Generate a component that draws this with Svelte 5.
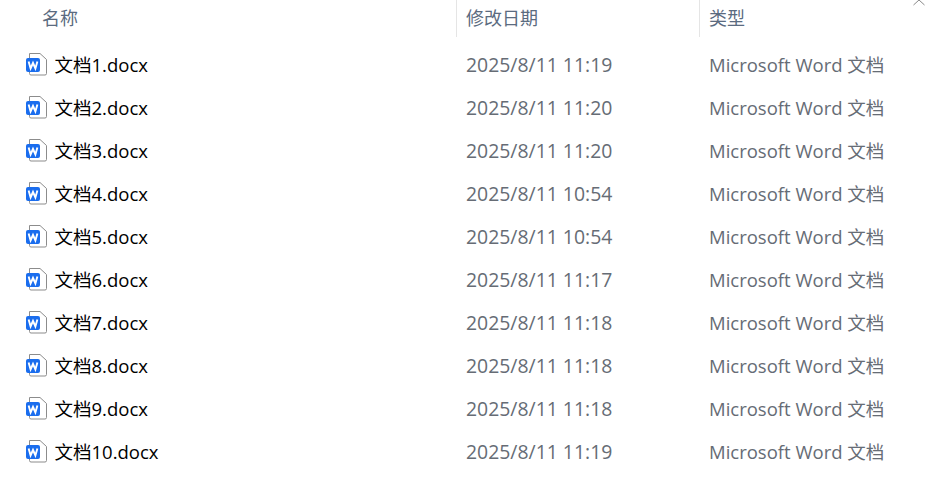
<script>
  const files = [
    { name: "文档1.docx", date: "2025/8/11 11:19" },
    { name: "文档2.docx", date: "2025/8/11 11:20" },
    { name: "文档3.docx", date: "2025/8/11 11:20" },
    { name: "文档4.docx", date: "2025/8/11 10:54" },
    { name: "文档5.docx", date: "2025/8/11 10:54" },
    { name: "文档6.docx", date: "2025/8/11 11:17" },
    { name: "文档7.docx", date: "2025/8/11 11:18" },
    { name: "文档8.docx", date: "2025/8/11 11:18" },
    { name: "文档9.docx", date: "2025/8/11 11:18" },
    { name: "文档10.docx", date: "2025/8/11 11:19" },
  ];
</script>

<div class="explorer">
  <div class="header">
    <div class="col name">名称</div>
    <div class="col date">修改日期</div>
    <div class="col type">类型</div>
    <svg class="sort" width="14" height="6" viewBox="0 0 14 6" aria-hidden="true">
      <path d="M1.5 5 L7 0 L12.5 5" fill="none" stroke="#8a8a8a" stroke-width="1" />
    </svg>
  </div>

  <div class="rows">
    {#each files as file}
      <div class="row">
        <div class="cell file">
          <svg class="icon" width="24" height="24" viewBox="0 0 24 24" aria-hidden="true">
            <path d="M4.5 1.5 H15 L21.5 7.5 V21.5 Q21.5 23 20 23 H6 Q4.5 23 4.5 21.5 Z" fill="#fff" stroke="#8c8c8c" stroke-width="1" />
            <rect x="1" y="6" width="14" height="14" rx="2" fill="#1a6dee" />
            <path d="M3.6 9.5 L5.6 16.5 L8 11 L10.4 16.5 L12.4 9.5" fill="none" stroke="#fff" stroke-width="1.9" />
          </svg>
          <span>{file.name}</span>
        </div>
        <div class="cell date-cell">{file.date}</div>
        <div class="cell muted">Microsoft Word 文档</div>
      </div>
    {/each}
  </div>
</div>

<style>
  :global(body) {
    margin: 0;
    background: #fff;
  }

  .explorer {
    width: 932px;
    height: 486px;
    overflow: hidden;
    font-family: "Open Sans", "Noto Sans CJK SC", sans-serif;
    font-size: 18.5px;
    background: #fff;
  }

  .header {
    position: relative;
    display: grid;
    grid-template-columns: 456px 243px 1fr;
    height: 37px;
    color: #5b6b80;
    font-size: 18px;
  }

  .col {
    line-height: 36px;
    padding-left: 9px;
    border-left: 1px solid #e5e5e5;
  }

  .col.name {
    padding-left: 42px;
    border-left: none;
  }

  .sort {
    position: absolute;
    top: 0;
    left: 912px;
  }

  .rows {
    padding-top: 5px;
  }

  .row {
    display: grid;
    grid-template-columns: 466px 243px 1fr;
    height: 43px;
    align-items: center;
  }

  .cell {
    white-space: nowrap;
  }

  .file {
    display: flex;
    align-items: center;
    padding-left: 25px;
    gap: 5.5px;
    color: #000;
  }

  .icon {
    flex-shrink: 0;
  }

  .muted {
    color: #666c75;
  }

  .date-cell {
    color: #666c75;
    font-size: 19.4px;
    padding-top: 2px;
  }
</style>
